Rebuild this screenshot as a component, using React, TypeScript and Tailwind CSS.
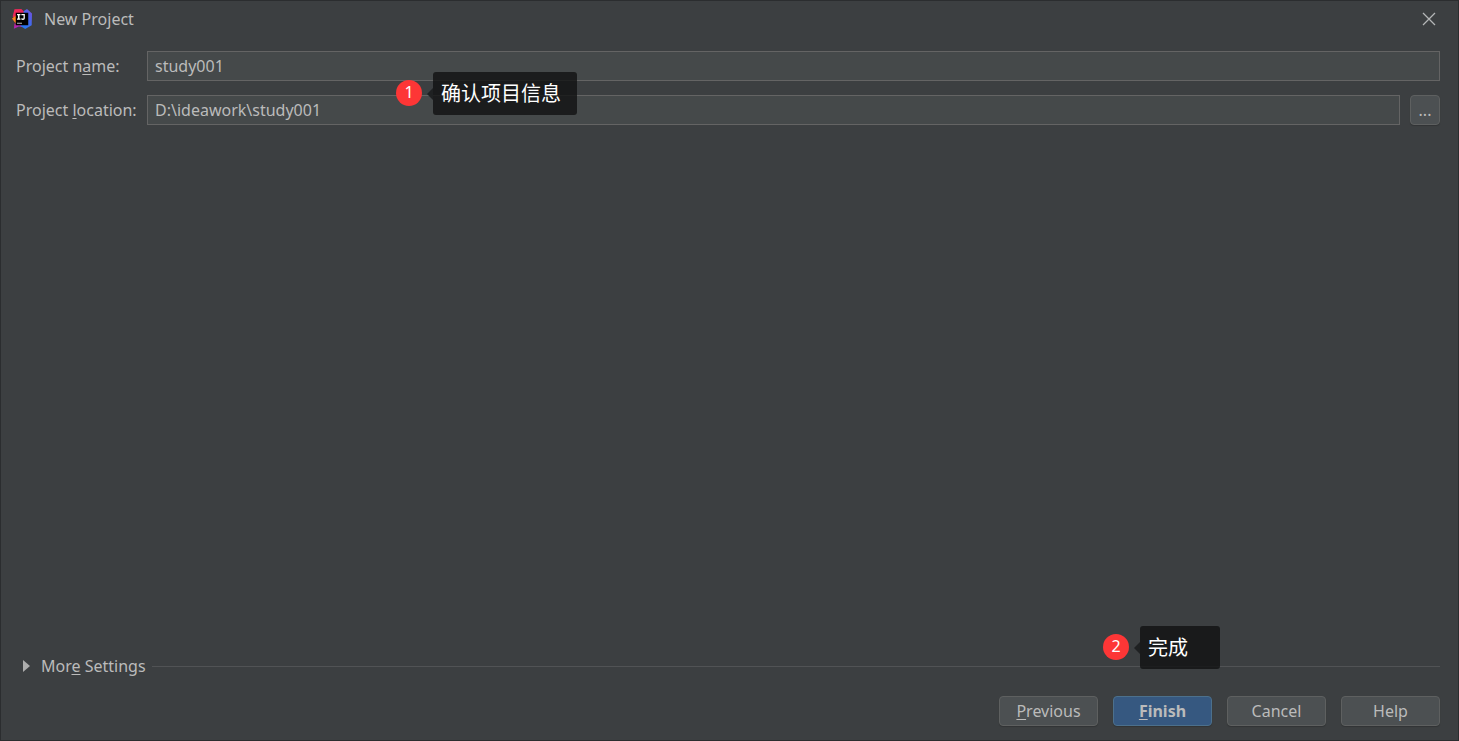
import type { ReactNode } from "react";

function Mnemonic({ children }: { children: ReactNode }) {
  return <span className="underline decoration-1 underline-offset-2">{children}</span>;
}

function AppLogo() {
  return (
    <svg viewBox="0 0 64 64" className="h-5 w-5" aria-hidden="true">
      <defs>
        <linearGradient id="logo-red" x1="0" y1="0" x2="1" y2="1">
          <stop offset="0" stopColor="#fe2857" />
          <stop offset="1" stopColor="#c5205e" />
        </linearGradient>
        <linearGradient id="logo-blue" x1="0" y1="1" x2="1" y2="0">
          <stop offset="0" stopColor="#1b7cf0" />
          <stop offset="0.5" stopColor="#3b6ef0" />
          <stop offset="1" stopColor="#7a4ad8" />
        </linearGradient>
        <linearGradient id="logo-violet" x1="0" y1="0" x2="1" y2="1">
          <stop offset="0" stopColor="#d0208a" />
          <stop offset="1" stopColor="#8a2be0" />
        </linearGradient>
      </defs>
      <path d="M8 1 30 0 42 12 40 36 14 34 2 24Z" fill="url(#logo-red)" />
      <path d="M0 30 14 20 18 46 10 44Z" fill="#fc801d" />
      <path d="M8 46 30 44 36 58 22 56 6 63Z" fill="url(#logo-violet)" />
      <path d="M38 6 48 0 64 14 63 52 42 64 28 54Z" fill="url(#logo-blue)" />
      <path d="M12 12h40v40H12z" fill="#000" />
      <path d="M16 44h16v3H16z" fill="#ccc" />
      <path
        d="M16 16h11v4h-3v10h3v4H16v-4h3V20h-3zM30 16h11v13c0 4-2 6-6 6-3 0-5-1-6-3l3-3c1 1 2 2 3 2 1 0 2-1 2-3v-8h-7z"
        fill="#fff"
      />
    </svg>
  );
}

function Callout({ number, text, className }: { number: number; text: string; className: string }) {
  return (
    <div className={`pointer-events-none absolute flex items-center ${className}`}>
      <span className="mb-px flex h-[26px] w-[26px] items-center justify-center rounded-full bg-[#fd3636] pb-0.5 text-base text-white">
        {number}
      </span>
      <span className="ml-[5px] h-0 w-0 border-y-6 border-r-6 border-y-transparent border-r-[#1f2122]" />
      <span className="flex h-[43px] grow items-center rounded-[3px] bg-[#101112]/80 px-2 text-xl text-white">
        {text}
      </span>
    </div>
  );
}

const fieldStyle =
  "h-[30px] min-w-0 grow border border-[#646464] bg-[#45494a] px-[7px] text-base text-[#bbbbbb] outline-none";
const buttonStyle =
  "h-[30px] w-[99px] rounded-[4px] border border-[#5e6060] bg-[#4c5052] shadow-[0_1px_1px_#0000002e]";

export default function App() {
  return (
    <main className="relative flex min-h-screen flex-col border border-[#2b2d2f] bg-[#3c3f41] font-['Noto_Sans','Noto_Sans_CJK_SC',sans-serif] text-base text-[#bbbbbb]">
      <header className="flex h-[35px] items-center pr-[22px] pl-[11px]">
        <AppLogo />
        <h1 className="ml-3 grow">New Project</h1>
        <button type="button" aria-label="Close">
          <svg viewBox="0 0 14 14" className="h-3.5 w-3.5" stroke="#b4b6b7" strokeWidth="1.3" fill="none">
            <path d="M1 1 13 13M13 1 1 13" />
          </svg>
        </button>
      </header>

      <form className="mt-[15px] grid grid-cols-[131px_1fr] items-center gap-y-3.5 pr-[18px] pl-[15px]">
        <label htmlFor="project-name">
          Project n<Mnemonic>a</Mnemonic>me:
        </label>
        <div className="flex">
          <input id="project-name" className={fieldStyle} defaultValue="study001" />
        </div>
        <label htmlFor="project-location">
          Project <Mnemonic>l</Mnemonic>ocation:
        </label>
        <div className="flex gap-2.5">
          <input id="project-location" className={fieldStyle} defaultValue="D:\ideawork\study001" />
          <button
            type="button"
            aria-label="Browse"
            className="h-[30px] w-[30px] rounded-[4px] border border-[#5e6060] bg-[#4c5052] shadow-[0_1px_1px_#0000002e]"
          >
            ...
          </button>
        </div>
      </form>

      <div className="mt-auto flex items-center pr-[18px] pl-[22px]">
        <button type="button" className="flex items-center gap-[11px]">
          <svg viewBox="0 0 7 12" className="h-3 w-[7px]" fill="#adadad" aria-hidden="true">
            <path d="M0 0 7 6 0 12Z" />
          </svg>
          <span>
            Mor<Mnemonic>e</Mnemonic> Settings
          </span>
        </button>
        <span className="ml-1.5 h-px grow bg-[#515355]" />
      </div>

      <footer className="mt-[18px] mb-3.5 flex justify-end gap-[15px] pr-[18px]">
        <button type="button" className={buttonStyle}>
          <Mnemonic>P</Mnemonic>revious
        </button>
        <button
          type="button"
          className="h-[30px] w-[99px] rounded-[4px] border border-[#4c708c] bg-[#365880] font-bold shadow-[0_1px_1px_#0000002e]"
        >
          <Mnemonic>F</Mnemonic>inish
        </button>
        <button type="button" className={buttonStyle}>
          Cancel
        </button>
        <button type="button" className={buttonStyle}>
          Help
        </button>
      </footer>

      <Callout number={1} text="确认项目信息" className="top-[71px] left-[395px] w-[181px]" />
      <Callout number={2} text="完成" className="right-[238px] bottom-[71px] w-[117px]" />
    </main>
  );
}
